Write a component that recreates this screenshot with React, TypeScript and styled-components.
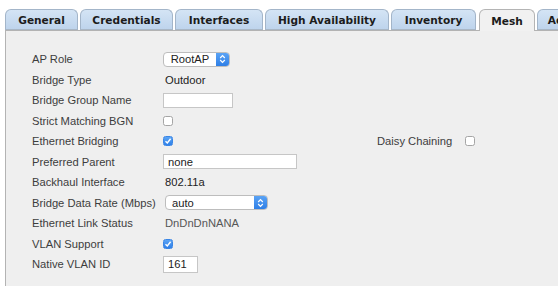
import React from "react";
import styled, { createGlobalStyle } from "styled-components";

const Global = createGlobalStyle`
  html, body { margin: 0; padding: 0; background: #ffffff; overflow: hidden; }
  body { width: 558px; height: 286px; }
  #root { width: 558px; height: 286px; }
`;

const Page = styled.div`
  width: 558px;
  height: 286px;
  padding: 9px 0 0 5px;
  box-sizing: border-box;
  display: flex;
  flex-direction: column;
  overflow: hidden;
`;

const TabBar = styled.div`
  display: flex;
  gap: 2px;
  height: 21px;
  position: relative;
  z-index: 1;
  white-space: nowrap;
`;

const Tab = styled.div<{ $w: number; $active?: boolean; $ml?: number }>`
  flex: 0 0 ${(p) => p.$w}px;
  width: ${(p) => p.$w}px;
  margin-left: ${(p) => p.$ml ?? 0}px;
  box-sizing: border-box;
  height: ${(p) => (p.$active ? 22 : 21)}px;
  border: 1px solid ${(p) => (p.$active ? "#b4b4b4" : "#a3b5c9")};
  border-bottom: ${(p) => (p.$active ? "none" : "1px solid #a9b7c6")};
  border-radius: 6px 6px 0 0;
  background: ${(p) =>
    p.$active ? "#f1f1f1" : "linear-gradient(#d4e4f5, #bed4ec)"};
  display: flex;
  align-items: center;
  justify-content: center;
  padding-top: 1px;
  font-family: "DejaVu Sans", Verdana, sans-serif;
  font-weight: bold;
  font-size: 10.6px;
  color: #1c1c1c;
`;

const Panel = styled.div`
  flex: 1;
  background: #efefef;
  border-left: 1px solid #b3b3b3;
  border-top: 1px solid #b3b3b3;
  padding: 18px 0 0 26px;
  box-sizing: border-box;
  font-family: "Liberation Sans", Arial, sans-serif;
  font-size: 11.2px;
`;

const Row = styled.div`
  display: flex;
  align-items: center;
  height: 20.5px;
`;

const Label = styled.div`
  width: 131px;
  flex: 0 0 131px;
  color: #3d3d3d;
`;

const ValueCell = styled.div<{ $w?: number }>`
  width: ${(p) => (p.$w ? `${p.$w}px` : "auto")};
  display: flex;
  align-items: center;
`;

const Value = styled.span<{ $muted?: boolean }>`
  color: ${(p) => (p.$muted ? "#575757" : "#222")};
  padding-left: 2px;
`;

const TextBox = styled.div<{ $w: number; $h?: number }>`
  width: ${(p) => p.$w}px;
  height: ${(p) => p.$h ?? 15}px;
  box-sizing: border-box;
  background: #fff;
  border: 1px solid #c6c6c6;
  color: #222;
  display: flex;
  align-items: center;
  padding-left: 4px;
`;

const SelectBox = styled.div<{ $w: number; $ml?: number }>`
  width: ${(p) => p.$w}px;
  margin-left: ${(p) => p.$ml ?? 0}px;
  height: 15px;
  box-sizing: border-box;
  background: #fff;
  border: 1px solid #bdbdbd;
  border-radius: 4px;
  display: flex;
  align-items: stretch;
  overflow: hidden;
  color: #222;
`;

const SelectText = styled.div<{ $center?: boolean }>`
  flex: 1;
  display: flex;
  align-items: center;
  justify-content: ${(p) => (p.$center ? "center" : "flex-start")};
  padding-left: ${(p) => (p.$center ? 0 : 6)}px;
`;

const SelectArrow = styled.div`
  width: 13px;
  background: linear-gradient(#5aa3f5, #2f7fe6);
  display: flex;
  align-items: center;
  justify-content: center;
`;

const Check = styled.div<{ $checked?: boolean }>`
  width: 10px;
  height: 10px;
  box-sizing: border-box;
  border-radius: 2.5px;
  border: 1px solid ${(p) => (p.$checked ? "#3a86e6" : "#a5a5a5")};
  background: ${(p) => (p.$checked ? "linear-gradient(#5ba4f5, #2f80e8)" : "#fff")};
  display: flex;
  align-items: center;
  justify-content: center;
`;

const SideLabel = styled.div`
  color: #3d3d3d;
  margin-right: 13px;
`;

const Arrows = () => (
  <svg width="7" height="10" viewBox="0 0 7 10">
    <path d="M1.2 4 L3.5 1.7 L5.8 4" stroke="#fff" strokeWidth="1.2" fill="none" />
    <path d="M1.2 6 L3.5 8.3 L5.8 6" stroke="#fff" strokeWidth="1.2" fill="none" />
  </svg>
);

const Tick = () => (
  <svg width="8" height="8" viewBox="0 0 8 8">
    <path d="M1.5 4.2 L3.3 6 L6.6 1.8" stroke="#fff" strokeWidth="1.4" fill="none" />
  </svg>
);

const Checkbox = ({ checked }: { checked?: boolean }) => (
  <Check $checked={checked}>{checked && <Tick />}</Check>
);

const tabs = [
  { t: "General", w: 73 },
  { t: "Credentials", w: 93 },
  { t: "Interfaces", w: 88 },
  { t: "High Availability", w: 124 },
  { t: "Inventory", w: 85 },
  { t: "Mesh", w: 56, active: true, ml: 1 },
  { t: "Advanced", w: 80 },
];

export default function App() {
  return (
    <>
      <Global />
      <Page>
        <TabBar>
          {tabs.map((t) => (
            <Tab key={t.t} $w={t.w} $active={t.active} $ml={t.ml}>
              {t.t}
            </Tab>
          ))}
        </TabBar>
        <Panel>
          <Row>
            <Label>AP Role</Label>
            <SelectBox $w={67}>
              <SelectText $center>RootAP</SelectText>
              <SelectArrow>
                <Arrows />
              </SelectArrow>
            </SelectBox>
          </Row>
          <Row>
            <Label>Bridge Type</Label>
            <Value>Outdoor</Value>
          </Row>
          <Row>
            <Label>Bridge Group Name</Label>
            <TextBox $w={70} />
          </Row>
          <Row>
            <Label>Strict Matching BGN</Label>
            <Checkbox />
          </Row>
          <Row>
            <Label>Ethernet Bridging</Label>
            <ValueCell $w={214}>
              <Checkbox checked />
            </ValueCell>
            <SideLabel>Daisy Chaining</SideLabel>
            <Checkbox />
          </Row>
          <Row>
            <Label>Preferred Parent</Label>
            <TextBox $w={134}>none</TextBox>
          </Row>
          <Row>
            <Label>Backhaul Interface</Label>
            <Value>802.11a</Value>
          </Row>
          <Row>
            <Label>Bridge Data Rate (Mbps)</Label>
            <SelectBox $w={103} $ml={2}>
              <SelectText>auto</SelectText>
              <SelectArrow>
                <Arrows />
              </SelectArrow>
            </SelectBox>
          </Row>
          <Row>
            <Label>Ethernet Link Status</Label>
            <Value $muted>DnDnDnNANA</Value>
          </Row>
          <Row>
            <Label>VLAN Support</Label>
            <Checkbox checked />
          </Row>
          <Row>
            <Label>Native VLAN ID</Label>
            <TextBox $w={35} $h={17}>161</TextBox>
          </Row>
        </Panel>
      </Page>
    </>
  );
}
